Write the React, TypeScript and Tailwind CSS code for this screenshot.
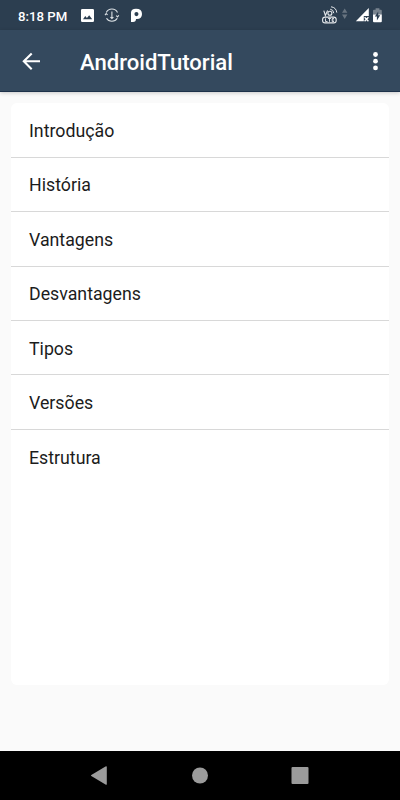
const topics = [
  "Introdução",
  "História",
  "Vantagens",
  "Desvantagens",
  "Tipos",
  "Versões",
  "Estrutura",
];

const StatusBar = () => (
  <div className="flex h-[30px] items-center bg-[#2c3e50] pl-[18px] text-white">
    <span className="w-[63px] whitespace-nowrap pt-[3px] text-[13.2px] font-medium leading-none">
      8:18 PM
    </span>
    {/* Notifications */}
    <svg className="h-[30px] w-[64px]" viewBox="81 0 64 30">
      <path
        fill="#fff"
        fillRule="evenodd"
        d="M82.3 9h10.4q1.3 0 1.3 1.3v10.4q0 1.3-1.3 1.3H82.3q-1.3 0-1.3-1.3V10.3Q81 9 82.3 9zm.7 10.2h9.2l-3-4-2.3 2.9-1.6-2z"
      />
      <g fill="none" stroke="#dce1e5" strokeWidth="1.1">
        <path d="M106.3 12.4a6.3 6.3 0 0 1 11.2 0M106.5 18.2a6.3 6.3 0 0 0 10.8 0" />
        <path d="M111.9 11.5v7M110.4 17.2l1.5 1.4 1.5-1.4M105 15.2l1.2-1.6 1.4 1.2M116.2 15.6l1.4 1.4 1.2-1.8" />
      </g>
      <path
        fill="#fff"
        fillRule="evenodd"
        d="M131 12.6Q131 8.8 136 8.8q6 0 6 5.2 0 5-5.2 5h-.8q0 3-3 3h-2zm5.4-.6q-2 0-2 2.1 0 2.1 2 2.1 2.1 0 2.1-2.1 0-2.1-2.1-2.1z"
      />
    </svg>
    {/* Network and battery */}
    <svg className="ml-auto h-[30px] w-[80px]" viewBox="320 0 80 30">
      <g fill="none" stroke="#e6e9ec" strokeWidth="1.1">
        <path d="M323.8 10.6l1.6 4.9 2.2-4.9" />
        <circle cx="329.9" cy="13.2" r="2" />
        <path strokeWidth="1" d="M330.2 9.2q3.2.4 3.6 4M331 6.8q5.2.6 5.8 5.8" />
        <rect x="322.6" y="17.1" width="13.6" height="5.8" rx="2.4" />
        <path strokeWidth=".9" d="M325.5 18.4v3.1h2M328 18.5h3M329.5 18.5v3.3M334 18.5h-1.8v3h1.8M332 20h1.8" />
      </g>
      <path fill="#687480" d="M342 12.8l2.7-4.3 2.7 4.3zM342 14.6l2.7 4.3 2.7-4.3z" />
      <path fill="#fff" d="M368.8 8v8h-5v5.2h-8z" />
      <path stroke="#fff" strokeWidth="1.3" d="M364.6 17.2l3.8 4M368.4 17.2l-3.8 4" />
      <path fill="#78838e" d="M373 10.8q0-1 1-1h1.6V8.2h3.8v1.6h1.4q1 0 1 1v4H373z" />
      <path fill="#fff" d="M373 14.5h8.8v6.8q0 1-1 1H374q-1 0-1-1z" />
      <path fill="#2c3e50" d="M378.2 11.5v3.7h2l-3.3 5.3v-4.1h-2z" />
    </svg>
  </div>
);

const Toolbar = () => (
  <header className="relative z-10 flex h-[62px] items-center border-b border-[#1d314a] bg-[#34495e] text-white shadow-[0_1px_4px_rgba(0,0,0,0.2)]">
    <svg className="ml-[22px] h-[18px] w-[18px] shrink-0" viewBox="0 0 18 18">
      <path fill="none" stroke="#fff" strokeWidth="2.1" d="M18 9.3H2M9.7 1.4L1.8 9.3l7.9 7.9" />
    </svg>
    <h1 className="ml-10 pt-[3px] text-[22.1px] font-medium leading-none">AndroidTutorial</h1>
    <svg className="ml-auto mr-[21px] h-5 w-[7px]" viewBox="0 0 7 20">
      <circle cx="3.5" cy="3.5" r="2.4" fill="#fff" />
      <circle cx="3.5" cy="10.2" r="2.4" fill="#fff" />
      <circle cx="3.5" cy="16.9" r="2.4" fill="#fff" />
    </svg>
  </header>
);

const NavBar = () => (
  <nav className="h-[49px] bg-black">
    <svg className="h-[49px] w-full" viewBox="0 751 400 49" fill="#9b9b9b">
      <path d="M91.3 775.1l14.2-8.6q1.3-.7 1.3.6v16.8q0 1.3-1.3.6l-14.2-8.6q-.7-.4 0-.8z" />
      <circle cx="200" cy="775.5" r="8" />
      <rect x="291.5" y="767" width="17" height="17" rx="1" />
    </svg>
  </nav>
);

export default function App() {
  return (
    <div className="flex h-screen flex-col bg-[#fafafa] font-[Roboto,sans-serif]">
      <StatusBar />
      <Toolbar />
      <main className="flex-1 px-[11px] pt-[10.5px]">
        <ul className="h-[582px] overflow-hidden rounded-md bg-white pt-[0.7px]">
          {topics.map((topic) => (
            <li
              key={topic}
              className="flex h-[54.45px] items-center border-b border-[#d8d8d8] pl-[18px] pt-[3.5px] text-[17.75px] leading-none text-[#1c1c1c] last:border-b-0"
            >
              {topic}
            </li>
          ))}
        </ul>
      </main>
      <NavBar />
    </div>
  );
}
